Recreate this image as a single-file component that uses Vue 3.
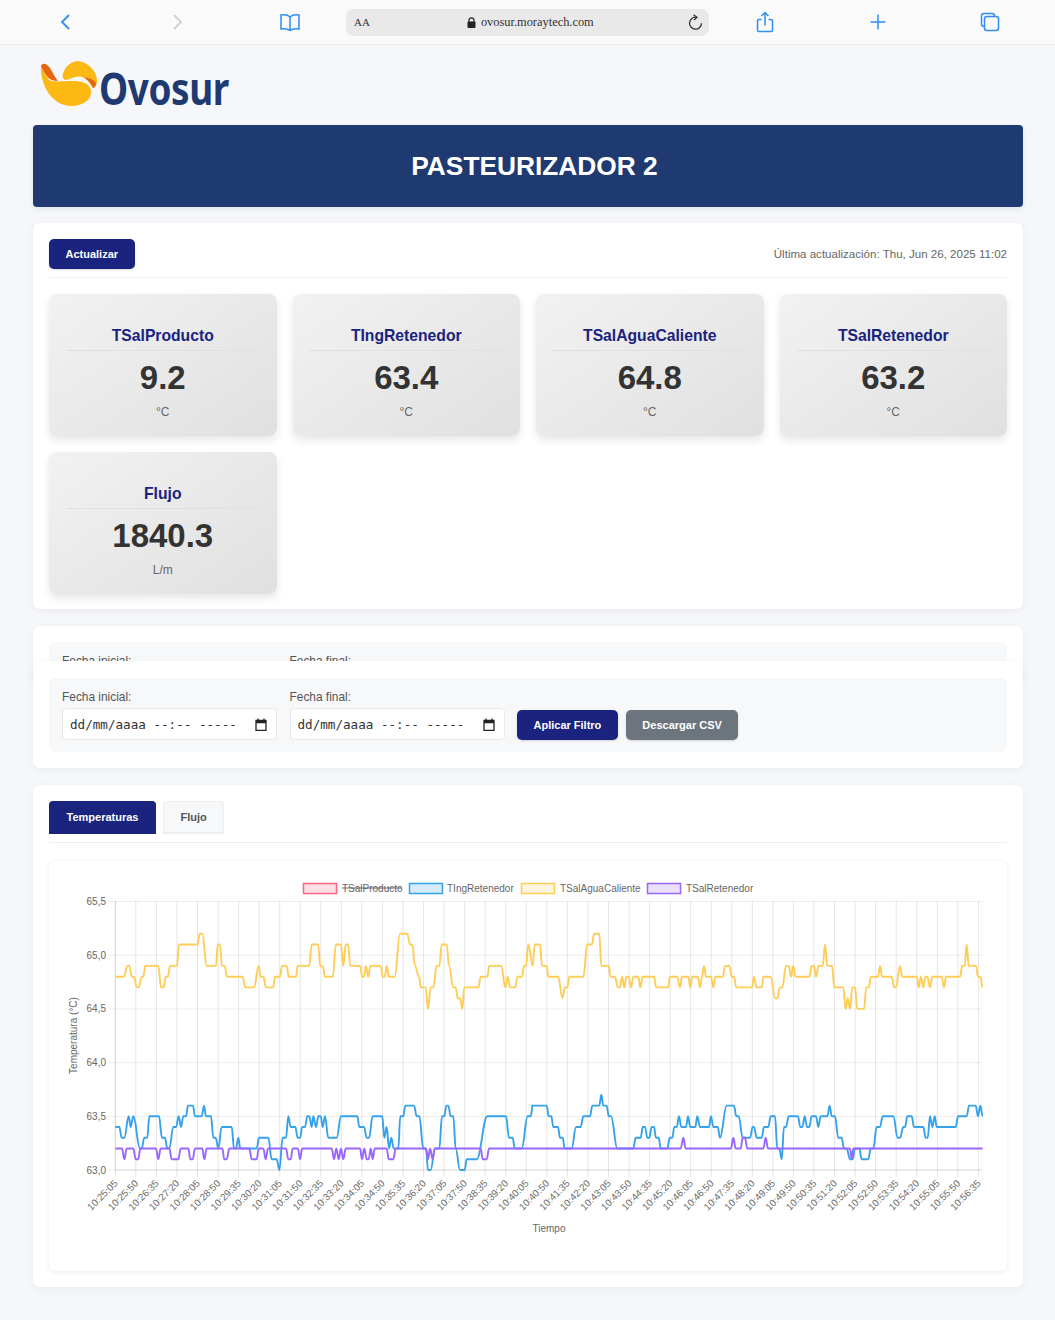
<script setup>
import { computed } from "vue";

const metrics = [
    { name: "TSalProducto", value: "9.2", unit: "°C" },
    { name: "TIngRetenedor", value: "63.4", unit: "°C" },
    { name: "TSalAguaCaliente", value: "64.8", unit: "°C" },
    { name: "TSalRetenedor", value: "63.2", unit: "°C" },
    { name: "Flujo", value: "1840.3", unit: "L/m" }
]

// chart area, in page pixels (the svg viewBox uses the same numbers)
const left = 115.3
const right = 982.5
const top = 901
const bottom = 1170
const tickGap = 20.55
const yOf = (v) => bottom - (v - 630) * 10.74

const yTicks = [
    { label: "65,5", v: 655 },
    { label: "65,0", v: 650 },
    { label: "64,5", v: 645 },
    { label: "64,0", v: 640 },
    { label: "63,5", v: 635 },
    { label: "63,0", v: 630 }
]

const pad = (n) => String(n).padStart(2, "0")
const xTicks = Array.from({ length: 43 }, (_, i) => {
    const secs = 10 * 3600 + 25 * 60 + 5 + i * 45
    const label = `${pad(Math.floor(secs / 3600))}:${pad(Math.floor(secs / 60) % 60)}:${pad(secs % 60)}`
    return { x: left + i * tickGap, label }
})

const legend = [
    { label: "TSalProducto", x: 303, text: 342, end: 401, color: "#ff6384", fill: "rgba(255,99,132,.2)", off: true },
    { label: "TIngRetenedor", x: 409, text: 447, end: 513, color: "#36a2eb", fill: "rgba(54,162,235,.2)" },
    { label: "TSalAguaCaliente", x: 521, text: 560, end: 639, color: "#ffcd56", fill: "rgba(255,205,86,.2)" },
    { label: "TSalRetenedor", x: 647, text: 686, end: 752, color: "#9966ff", fill: "rgba(153,102,255,.2)" }
]

// traced from the plot: x (3x zoom coords), value in tenths
const yellowA = [196,648,222,648,232,649,238,649,246,648,252,648,260,647,266,647,275,648,280,648,286,649,325,649,333,647,341,647,347,648,354,648,360,649,381,649,387,651,442,651,449,652,457,652,470,649,498,649,503,651,510,651,516,649,524,649,531,648,578,648,586,647,612,647,626,649,632,648,640,648,648,647,670,647,675,648,690,648,696,649,710,649,716,648,738,648,743,649,778,649,785,651,804,651,811,649,818,649,825,648,848,648,858,651,873,651,880,649,887,651,894,651,901,649,930,649,937,648,942,648,948,649,955,648,961,649,992,649,998,648,1004,648,1010,649,1017,648,1034,648,1050,652,1072,652,1080,651,1087,651,1095,649,1107,648,1113,647,1127,647,1134,645,1142,647,1150,647,1160,649,1168,649,1175,651,1190,651,1197,649,1210,647,1217,647,1223,646,1230,646,1237,645,1243,647,1285,647,1292,648,1312,648,1318,649,1354,649,1366,647,1373,648,1380,647,1396,647,1402,648,1416,648,1422,649,1428,649,1435,651]
const yellowB = [8,649,14,651,30,651,36,649,50,649,55,648,85,648,97,646,105,647,112,647,118,648,160,648,172,651,186,651,192,652,208,652,214,649,236,649,242,648,255,648,263,647,270,647,276,648,283,647,289,648,296,648,303,647,310,648,325,648,331,647,338,648,372,648,379,647,414,647,420,648,442,648,450,647,456,648,475,648,481,647,487,648,503,648,510,647,516,648,522,649,528,648,543,648,550,647,556,648,578,648,585,649,598,649,605,648,612,648,619,647,666,647,672,648,680,647,695,647,700,648,722,648,735,646,742,646,750,647,757,647,768,649,776,649,783,648,790,649,797,648,838,648,845,649,852,649,858,648,866,649,878,649,885,651,892,649,906,649,913,647,940,647,947,645,953,646,960,645,967,647,975,647,982,645,1002,645,1009,647,1016,647,1023,648,1044,648,1050,649,1056,648,1085,648,1092,647,1098,647,1110,649,1117,648,1160,648,1166,647,1172,648,1180,647,1186,648,1192,648,1200,647,1207,648,1235,648,1242,647,1248,648,1290,648,1297,649,1304,649,1310,651,1316,649,1338,649,1344,648,1351,648,1358,647]
const blueA = [166,634,178,634,185,633,193,633,206,635,212,634,220,635,240,632,245,632,253,633,262,633,268,635,297,635,306,633,315,633,322,632,328,632,340,634,348,634,356,635,363,634,370,635,378,635,384,636,399,636,405,635,425,635,432,636,438,635,453,635,460,633,467,633,475,632,485,634,515,634,522,632,528,632,535,633,541,632,590,632,597,633,625,633,635,631,650,631,658,630,668,633,678,633,685,635,692,634,706,634,713,633,720,633,727,634,735,634,742,635,748,635,755,634,760,635,768,634,775,635,782,635,788,634,795,635,805,633,830,633,843,635,892,635,898,634,912,634,920,633,927,633,938,635,967,635,973,633,980,634,987,632,994,633,1001,632,1015,632,1021,635,1030,635,1036,636,1062,636,1070,635,1078,635,1090,632,1098,632,1104,630,1112,630,1125,632,1138,632,1146,635,1153,635,1159,636,1165,636,1172,635,1180,635,1187,632,1200,630,1214,630,1220,631,1250,631,1282,635,1338,635,1347,633,1358,633,1364,632,1385,632,1403,635,1412,635,1418,636]
const blueB = [6,636,50,636,56,635,64,635,70,634,84,634,90,633,98,633,104,632,125,632,138,634,152,634,160,635,180,635,187,636,208,636,214,637,220,636,230,636,236,635,243,635,262,632,310,632,317,633,332,633,338,634,345,634,352,633,358,633,365,634,372,634,378,633,386,633,392,632,412,632,419,633,427,633,433,634,440,634,447,635,454,634,468,634,474,635,481,634,496,634,502,635,510,634,537,634,543,635,550,634,563,634,570,633,590,636,612,636,619,635,626,635,638,633,660,633,668,634,672,634,680,633,695,633,702,634,715,634,722,635,735,635,742,632,748,632,755,631,762,634,768,634,776,635,804,635,811,634,817,634,824,635,831,634,838,634,845,635,858,635,865,634,872,635,892,635,899,636,905,635,915,635,925,633,935,633,942,632,950,632,960,631,968,631,975,632,988,632,995,631,1015,631,1022,632,1030,632,1040,634,1050,634,1058,635,1090,635,1103,633,1110,633,1120,634,1125,634,1132,635,1145,635,1152,634,1180,634,1187,633,1193,633,1200,635,1207,634,1214,635,1220,634,1277,634,1284,635,1310,635,1317,636,1337,636,1344,635,1351,636,1358,635]
const purpleA = [166,632,186,632,193,631,200,632,220,632,227,631,235,631,241,632,288,632,295,631,302,632,328,632,335,631,355,631,362,632,385,632,391,631,398,631,405,632,427,632,433,631,440,632,487,632,493,631,500,631,508,632,568,632,575,631,590,631,596,632,610,632,617,631,624,632,678,632,685,631,692,631,698,632,714,632,720,631,727,632,815,632,822,631,829,632,836,631,843,632,850,631,857,632,900,632,906,631,913,632,920,631,926,631,932,632,938,631,944,632,980,632,986,631,1000,631,1007,632,1098,632,1104,631,1110,632,1118,631,1124,632,1262,632,1268,631,1280,631,1287,632]
const purpleB = [452,632,460,633,467,632,603,632,610,633,617,632,632,632,638,633,645,633,652,632,700,632,707,633,714,632,960,632,965,631,970,632,1358,632]

const toPoints = (list, originX) => {
    const pts = []
    for (let i = 0; i < list.length; i += 2) {
        pts.push([originX + list[i] / 3, yOf(list[i + 1])])
    }
    return pts
}

const linePath = (pts) => {
    let d = `M${pts[0][0].toFixed(1)} ${pts[0][1].toFixed(1)}`
    for (let i = 1; i < pts.length; i++) {
        const [x0, y0] = pts[i - 1]
        const [x1, y1] = pts[i]
        const dx = (x1 - x0) * 0.4
        d += `C${(x0 + dx).toFixed(1)} ${y0.toFixed(1)} ${(x1 - dx).toFixed(1)} ${y1.toFixed(1)} ${x1.toFixed(1)} ${y1.toFixed(1)}`
    }
    return d
}

const series = computed(() => [
    { color: "#ffcd56", d: linePath([...toPoints(yellowA, 50), ...toPoints(yellowB, 530)]) },
    { color: "#36a2eb", d: linePath([...toPoints(blueA, 60), ...toPoints(blueB, 530)]) },
    { color: "#9966ff", d: linePath([...toPoints(purpleA, 60), ...toPoints(purpleB, 530)]) }
])
</script>

<template>
    <!-- Safari toolbar -->
    <div class="toolbar">
        <div class="tool">
            <svg width="24" height="24" viewBox="0 0 24 24"><path d="M16 5l-7 7 7 7" class="ico" /></svg>
        </div>
        <div class="tool">
            <svg width="24" height="24" viewBox="0 0 24 24"><path d="M8 5l7 7-7 7" class="ico off" /></svg>
        </div>
        <div class="tool">
            <svg width="24" height="24" viewBox="0 0 24 24">
                <path d="M12 7c-2-2-5-2.500-9-2v14c4-.5 7 0 9 1.500 2-1.500 5-2 9-1.500V5c-4-.5-7 0-9 2zM12 7v13.500" class="ico thin" />
            </svg>
        </div>
        <div class="urlbar">
            <span class="aa">AA</span>
            <span class="address">
                <svg width="9" height="11" viewBox="0 0 9 11"><path d="M2 5V3.300a2.500 2.500 0 0 1 5 0V5" fill="none" stroke="#222" stroke-width="1.200" /><rect x=".5" y="4.500" width="8" height="6.500" rx="1" fill="#222" /></svg>
                ovosur.moraytech.com
            </span>
            <svg class="reload" width="16" height="17" viewBox="0 0 16 17">
                <path d="M9 3.200a6 6 0 1 0 5.500 6" fill="none" stroke="#333" stroke-width="1.300" />
                <path d="M6.500.7L10 3.200 7 6" fill="none" stroke="#333" stroke-width="1.300" />
            </svg>
        </div>
        <div class="tool">
            <svg width="24" height="24" viewBox="0 0 24 24">
                <path d="M8.500 9.500H6a1.500 1.500 0 0 0-1.500 1.500v9A1.500 1.500 0 0 0 6 21.500h12a1.500 1.500 0 0 0 1.500-1.500v-9A1.500 1.500 0 0 0 18 9.500h-2.500M12 15.500V2.500M8.500 6L12 2.500 15.500 6" class="ico thin" />
            </svg>
        </div>
        <div class="tool">
            <svg width="24" height="24" viewBox="0 0 24 24"><path d="M4.500 12h15M12 4.500v15" class="ico thin" /></svg>
        </div>
        <div class="tool">
            <svg width="24" height="24" viewBox="0 0 24 24">
                <path d="M6 16.500A2.500 2.500 0 0 1 3.500 14V6A2.500 2.500 0 0 1 6 3.500h8A2.500 2.500 0 0 1 16.500 6" class="ico thin" />
                <rect x="6.500" y="6.500" width="14" height="14" rx="2.500" class="ico thin" />
            </svg>
        </div>
    </div>

    <div class="page">
        <div class="logo">
            <svg width="58" height="50" viewBox="40 58 58 50">
                <path d="M41 66C40 86 53 106 71 106 84 106 92 99 91 91 90 83 82 81 72 81 64 81 57 82 51 81 47 79 44 71 41 66Z" fill="#fdb913" />
                <path d="M41 66C43 62 47 64 50 68 53 73 56 79 58 81 50 81 46 77 41 66Z" fill="#e8650f" />
                <path d="M63 74C65 66 72 61 78 61 88 62 97 71 97 81 97 85 95 88 93 88 91 85 88 79 82 77 76 75 70 80 65 80 63 79 62 77 63 74Z" fill="#fdb913" />
                <path d="M85 78C89 77 95 81 96 83 96 86 94 88 93 88 92 85 88 80 85 78Z" fill="#e8650f" />
            </svg>
            <span class="logo-text">Ovosur</span>
        </div>

        <header class="banner">PASTEURIZADOR 2</header>

        <section class="card first">
            <div class="card-head">
                <button class="btn btn-primary">Actualizar</button>
                <span class="updated">Última actualización: Thu, Jun 26, 2025 11:02</span>
            </div>
            <div class="metrics">
                <div v-for="m in metrics" :key="m.name" class="metric">
                    <h3 class="metric-name">{{ m.name }}</h3>
                    <div class="metric-value">{{ m.value }}</div>
                    <div class="metric-unit">{{ m.unit }}</div>
                </div>
            </div>
        </section>

        <!-- the filter bar is sticky in the original: a copy shows behind it -->
        <section class="card ghost">
            <div class="filter-panel">
                <div class="field"><label>Fecha inicial:</label></div>
                <div class="field"><label>Fecha final:</label></div>
            </div>
        </section>
        <section class="card sticky">
            <div class="filter-panel">
                <div v-for="label in ['Fecha inicial:', 'Fecha final:']" :key="label" class="field">
                    <label>{{ label }}</label>
                    <div class="date-input">
                        <span>dd/mm/aaaa --:-- -----</span>
                        <svg width="12" height="13" viewBox="0 0 12 13">
                            <path d="M1 2.500h10v10H1zM1 4.500h10M3 .5v2M9 .5v2" fill="none" stroke="#222" stroke-width="1.300" />
                            <path d="M1 2h10v3H1z" fill="#222" />
                        </svg>
                    </div>
                </div>
                <div class="filter-actions">
                    <button class="btn btn-primary">Aplicar Filtro</button>
                    <button class="btn btn-grey">Descargar CSV</button>
                </div>
            </div>
        </section>

        <section class="card chart-card">
            <div class="tabs">
                <button class="tab active">Temperaturas</button>
                <button class="tab">Flujo</button>
            </div>
            <div class="chart-box">
                <svg width="958" height="410" viewBox="49 861 958 410" class="chart">
                    <g v-for="item in legend" :key="item.label">
                        <rect :x="item.x + 0.5" y="883.5" width="33" height="10" :fill="item.fill" :stroke="item.color" stroke-width="1.500" />
                        <text :x="item.text" y="891.500" class="chart-text">{{ item.label }}</text>
                        <line v-if="item.off" :x1="item.text" :x2="item.end" y1="888" y2="888" stroke="#666" stroke-width="1" />
                    </g>

                    <line v-for="t in xTicks" :key="t.label" :x1="t.x" :x2="t.x" :y1="top" :y2="bottom + 7" class="grid" />
                    <line v-for="t in yTicks" :key="t.label" :x1="left - 7" :x2="right" :y1="yOf(t.v)" :y2="yOf(t.v)" class="grid light" />
                    <line :x1="left" :x2="left" :y1="top" :y2="bottom" class="grid" />
                    <line :x1="left" :x2="right" :y1="bottom" :y2="bottom" class="grid" />
                    <text v-for="t in yTicks" :key="t.label" x="106" :y="yOf(t.v) + 3.5" text-anchor="end" class="chart-text">{{ t.label }}</text>
                    <text
                        v-for="t in xTicks"
                        :key="t.label"
                        :x="t.x + 3"
                        :y="bottom + 14"
                        text-anchor="end"
                        :transform="`rotate(-45 ${t.x + 3} ${bottom + 14})`"
                        class="chart-text small"
                    >{{ t.label }}</text>

                    <text x="549" y="1231.500" text-anchor="middle" class="chart-text">Tiempo</text>
                    <text x="77" y="1035.500" text-anchor="middle" transform="rotate(-90 77 1035.500)" class="chart-text">Temperatura (°C)</text>

                    <path v-for="s in series" :key="s.color" :d="s.d" fill="none" :stroke="s.color" stroke-width="1.900" stroke-linejoin="round" />
                </svg>
            </div>
        </section>
    </div>
</template>

<style>
body {
    background: #f5f7fb;
}
</style>

<style scoped>
.toolbar {
    display: grid;
    grid-template-columns: 112px 113px 112px 363px 112px 113px 112px;
    align-items: center;
    height: 45px;
    padding-left: 9px;
    background: #fafafa;
    border-bottom: 1px solid #efefef;
    box-sizing: border-box;
}

.tool {
    display: flex;
    justify-content: center;
    align-items: center;
}

.ico {
    fill: none;
    stroke: #2f8ff5;
    stroke-width: 1.800;
}

.ico.thin {
    stroke-width: 1.500;
}

.ico.off {
    stroke: #cfcfcf;
}

.urlbar {
    display: flex;
    align-items: center;
    height: 27px;
    padding: 0 6px 0 8px;
    border-radius: 8px;
    background: #e9e9e9;
    font-family: "Liberation Serif", serif;
    color: #333;
    font-size: 12.400px;
}

.aa {
    font-size: 11px;
}

.address {
    display: flex;
    align-items: center;
    gap: 5px;
    margin-left: 97px;
    flex: 1;
}

.page {
    padding: 0 32px 0 33px;
    font-family: "Liberation Sans", Arial, sans-serif;
}

.logo {
    display: flex;
    align-items: flex-start;
    height: 67px;
    padding: 13px 0 0 7px;
    box-sizing: content-box;
    color: #1e3a70;
}

.logo-text {
    margin: 1.500px 0 0 1px;
    font-family: "Noto Sans", sans-serif;
    font-weight: 700;
    font-size: 45px;
    line-height: 56px;
    letter-spacing: -0.5px;
    transform: scaleX(0.82);
    transform-origin: left center;
}

.banner {
    height: 82px;
    line-height: 82px;
    padding-left: 13px;
    text-align: center;
    color: #fff;
    background: #1e3a70;
    border-radius: 4px;
    font-weight: bold;
    font-size: 26.300px;
    box-shadow: 0 2px 6px rgba(0, 0, 0, 0.08);
    margin-bottom: 16px;
}

.card {
    background: #fff;
    border-radius: 7px;
    padding: 16px;
    margin-bottom: 17px;
    box-shadow: 0 2px 10px rgba(0, 0, 0, 0.05);
}

.card.first {
    padding-bottom: 15px;
}

.card-head {
    display: flex;
    justify-content: space-between;
    height: 38px;
    margin-bottom: 16px;
    border-bottom: 1px solid #f1f1f1;
    align-items: flex-start;
}

.updated {
    margin-top: 9px;
    font-size: 11.550px;
    color: #666;
}

.btn {
    border: none;
    border-radius: 5px;
    font-family: inherit;
    font-weight: bold;
    font-size: 11px;
    color: #fff;
    height: 30px;
    padding: 0 16.500px;
    box-shadow: 0 1px 2px rgba(0, 0, 0, 0.15);
}

.btn-primary {
    background: #1a237e;
}

.btn-grey {
    background: #6c757d;
}

.metrics {
    display: grid;
    grid-template-columns: repeat(4, 1fr);
    gap: 16px;
}

.metric {
    height: 142px;
    padding: 32px 17px 0;
    box-sizing: border-box;
    text-align: center;
    border-radius: 8px;
    background: linear-gradient(145deg, #f2f2f2, #e0e0e0);
    box-shadow: 0 4px 8px rgba(0, 0, 0, 0.1);
}

.metric-name {
    margin: 0;
    padding-bottom: 5px;
    border-bottom: 1px solid #e0e0e0;
    font-size: 15.700px;
    line-height: 19px;
    color: #1a237e;
}

.metric-value {
    margin-top: 7px;
    font-weight: bold;
    font-size: 33px;
    line-height: 40px;
    color: #333;
}

.metric-unit {
    margin-top: 7px;
    font-size: 12px;
    line-height: 14px;
    color: #666;
}

.ghost {
    height: 60px;
    box-sizing: border-box;
    overflow: hidden;
    margin-bottom: 0;
}

.sticky {
    position: relative;
    margin-top: -25px;
    padding-top: 17px;
    z-index: 2;
}

.filter-panel {
    display: flex;
    align-items: flex-end;
    gap: 12.500px;
    padding: 12px 13px;
    background: #f7f8fa;
    border-radius: 6px;
}

.field {
    display: flex;
    flex-direction: column;
    gap: 4px;
    width: 215px;
}

.field label {
    font-size: 11.900px;
    line-height: 14px;
    color: #555;
}

.date-input {
    display: flex;
    justify-content: space-between;
    align-items: center;
    height: 32px;
    padding: 0 9px 0 7px;
    box-sizing: border-box;
    background: #fff;
    border: 1px solid #e8e8e8;
    border-radius: 4px;
    font-family: "DejaVu Sans Mono", monospace;
    font-size: 12.600px;
    color: #333;
}

.filter-actions {
    display: flex;
    gap: 8px;
}

.tabs {
    display: flex;
    gap: 7px;
    padding-bottom: 8px;
    border-bottom: 1px solid #eee;
}

.tab {
    height: 33px;
    padding: 0 16.500px;
    border: 1px solid #eee;
    border-bottom-width: 2px;
    border-radius: 4px 4px 0 0;
    background: #f7f8fa;
    font-family: inherit;
    font-weight: bold;
    font-size: 11px;
    color: #555;
}

.tab.active {
    background: #1a237e;
    border-color: #1a237e;
    color: #fff;
}

.chart-box {
    margin-top: 18px;
    height: 410px;
    border-radius: 6px;
    background: #fff;
    box-shadow: 0 1px 5px rgba(0, 0, 0, 0.09);
}

.chart {
    display: block;
}

.chart-text {
    font-family: "Liberation Sans", Arial, sans-serif;
    font-size: 10px;
    fill: #666;
}

.chart-text.small {
    font-size: 9.800px;
}

.grid {
    stroke: rgba(0, 0, 0, 0.1);
    stroke-width: 1;
}

.grid.light {
    stroke: rgba(0, 0, 0, 0.07);
}
</style>
